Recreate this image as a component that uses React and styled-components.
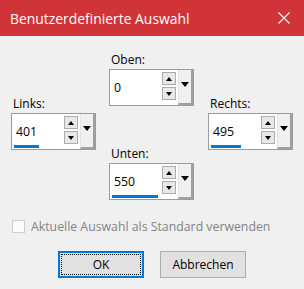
import styled, { createGlobalStyle } from "styled-components";

const GlobalStyle = createGlobalStyle`
  html, body {
    margin: 0;
    padding: 0;
    background: #f0f0f0;
  }
  body {
    font-family: "Open Sans", "Noto Sans", sans-serif;
    color: #000;
  }
`;

const fields = {
  top: { label: "Oben:", value: 0, fill: 0 },
  left: { label: "Links:", value: 401, fill: 0.55 },
  right: { label: "Rechts:", value: 495, fill: 0.66 },
  bottom: { label: "Unten:", value: 550, fill: 1 },
};

const SpinField = ({ label, value, fill }) => (
  <Group>
    <Label>{label}</Label>
    <Box>
      <Field>
        <Value>{value}</Value>
        <BarTrack>
          {fill > 0 && <Bar style={{ width: `${fill * 100}%` }} />}
        </BarTrack>
      </Field>
      <Spinner>
        <SpinButton>
          <Arrow up />
        </SpinButton>
        <SpinButton>
          <Arrow />
        </SpinButton>
      </Spinner>
      <Dropdown>
        <Arrow big />
      </Dropdown>
    </Box>
  </Group>
);

const App = () => {
  return (
    <>
      <GlobalStyle />
      <Dialog>
        <TitleBar>
          <Title>Benutzerdefinierte Auswahl</Title>
          <svg width="12" height="12" viewBox="0 0 12 12">
            <path d="M0.5 0.5 L11.5 11.5 M11.5 0.5 L0.5 11.5" stroke="#fff" strokeWidth="1.1" fill="none" />
          </svg>
        </TitleBar>
        <Body>
          <Cross>
            <SideColumn>
              <SpinField {...fields.left} />
            </SideColumn>
            <CenterColumn>
              <SpinField {...fields.top} />
              <SpinField {...fields.bottom} />
            </CenterColumn>
            <SideColumn>
              <SpinField {...fields.right} />
            </SideColumn>
          </Cross>
          <CheckRow>
            <CheckBox />
            <CheckLabel>Aktuelle Auswahl als Standard verwenden</CheckLabel>
          </CheckRow>
          <Buttons>
            <Button $primary>OK</Button>
            <Button>Abbrechen</Button>
          </Buttons>
        </Body>
      </Dialog>
    </>
  );
};

const Dialog = styled.div`
  width: 304px;
  height: 289px;
  background: #f0f0f0;
  display: flex;
  flex-direction: column;
  overflow: hidden;
`;

const TitleBar = styled.div`
  height: 36px;
  background: #d13438;
  display: flex;
  align-items: center;
  justify-content: space-between;
  padding: 0 14px 0 10px;
  box-sizing: border-box;
  flex-shrink: 0;
`;

const Title = styled.span`
  color: #fff;
  font-size: 13.9px;
  line-height: 18px;
  margin-top: 1px;
`;

const Body = styled.div`
  display: flex;
  flex-direction: column;
  padding-top: 16px;
`;

const Cross = styled.div`
  display: flex;
  gap: 13px;
  padding-left: 11px;

  & > :last-child {
    margin-left: 1px;
  }
`;

const SideColumn = styled.div`
  padding-top: 44px;
`;

const CenterColumn = styled.div`
  display: flex;
  flex-direction: column;
  gap: 40px;
`;

const Group = styled.div`
  display: flex;
  flex-direction: column;
  width: 85px;
`;

const Label = styled.div`
  font-size: 12px;
  line-height: 16px;
  height: 16px;
  margin-bottom: 1px;
  padding-left: 2px;
`;

const Box = styled.div`
  height: 37px;
  box-sizing: border-box;
  border: 1px solid #9c9c9c;
  background: #fff;
  display: flex;
`;

const Field = styled.div`
  flex: 1;
  display: flex;
  flex-direction: column;
  padding: 0 4px 1px 2px;
`;

const Value = styled.div`
  flex: 1;
  display: flex;
  align-items: center;
  padding: 3px 0 0 2px;
  font-size: 12.3px;
`;

const BarTrack = styled.div`
  height: 3px;
`;

const Bar = styled.div`
  height: 3px;
  background: #0078d7;
`;

const Spinner = styled.div`
  width: 14px;
  display: flex;
  flex-direction: column;
  gap: 2px;
  padding-top: 2px;
  margin-right: 2px;
`;

const SpinButton = styled.div`
  height: 13px;
  box-sizing: border-box;
  border: 1px solid #adadad;
  background: #e8e8e8;
  display: flex;
  align-items: center;
  justify-content: center;
`;

const Arrow = styled.span`
  width: 0;
  height: 0;
  border-left: ${(p) => (p.big ? 4 : 3.5)}px solid transparent;
  border-right: ${(p) => (p.big ? 4 : 3.5)}px solid transparent;
  ${(p) =>
    p.up
      ? "border-bottom: 4px solid #000;"
      : `border-top: ${p.big ? 5 : 4}px solid #000;`}
`;

const Dropdown = styled.div`
  width: 15px;
  box-sizing: border-box;
  background: #f0f0f0;
  border-left: 1px solid #e3e3e3;
  border-right: 2px solid #a0a0a0;
  border-bottom: 2px solid #a0a0a0;
  display: flex;
  justify-content: center;
  padding-top: 12px;
`;

const CheckRow = styled.div`
  display: flex;
  align-items: center;
  gap: 6px;
  margin-top: 19px;
  padding-left: 12px;
  height: 14px;
`;

const CheckBox = styled.span`
  width: 13px;
  height: 13px;
  box-sizing: border-box;
  border: 1px solid #cccccc;
  background: #fcfcfc;
`;

const CheckLabel = styled.span`
  font-size: 12.3px;
  color: #838383;
`;

const Buttons = styled.div`
  display: flex;
  justify-content: center;
  gap: 16px;
  margin-top: 18px;
`;

const Button = styled.button`
  width: 86px;
  height: 27px;
  box-sizing: border-box;
  font-family: "Open Sans", "Noto Sans", sans-serif;
  font-size: 12px;
  color: #000;
  background: #e1e1e1;
  border: ${(p) => (p.$primary ? "2px solid #0078d7" : "1px solid #adadad")};
  outline: ${(p) => (p.$primary ? "1px dotted #000" : "none")};
  outline-offset: -4px;
  padding: 0;
`;

export default App;
